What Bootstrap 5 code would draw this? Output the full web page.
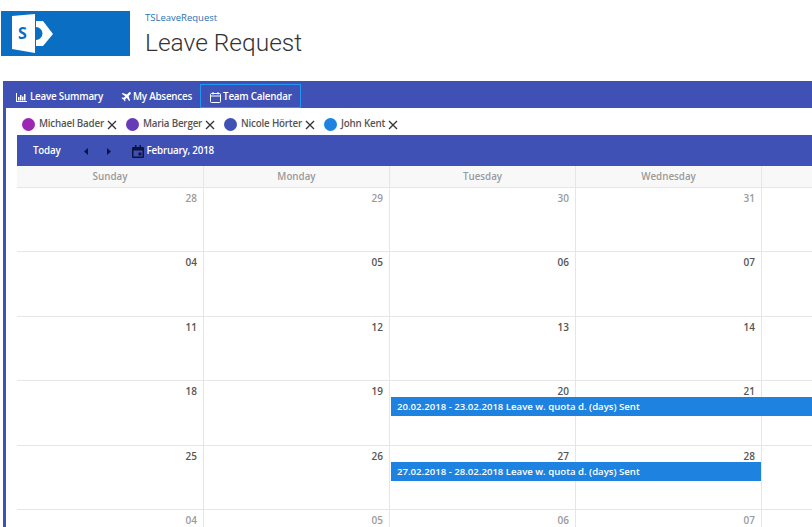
<!DOCTYPE html>
<html lang="en">
<head>
  <meta charset="UTF-8" />
  <meta name="viewport" content="width=device-width, initial-scale=1.0"/>
  <title>Leave Request</title>
  <link href="https://cdn.jsdelivr.net/npm/bootstrap@5.3.3/dist/css/bootstrap.min.css" rel="stylesheet">
  <style>
    html, body { height: 527px; overflow: hidden; }
    body { font-family: "Open Sans", "Noto Sans", sans-serif; background: #fff; color: #444; }
    .site-head { height: 81px; padding: 11px 0 0 1px; }
    .site-logo { width: 129px; height: 45px; background: #0a6fc2; padding: 3px 0 0 11px; }
    .site-titles { margin-left: 15px; }
    .site-crumb { font-size: 9.5px; line-height: 12px; color: #2a72b5; margin-top: 1px; }
    .site-title { font-family: Roboto, sans-serif; font-weight: 300; font-size: 24.5px; line-height: 34px; color: #333; margin: 2px 0 0; }
    .app-frame { margin-left: 3px; border-left: 3px solid #3f51b5; height: 446px; overflow: hidden; }
    .app-tabs { background: #3f51b5; height: 27px; margin-left: -3px; padding-left: 3px; }
    .app-tab { height: 24px; padding: 2px 8px 0 10px; color: #fff; font-size: 9.8px; letter-spacing: -.2px; font-weight: 600; gap: 2px; text-decoration: none; }
    .app-tab.active { border: 1px solid #2196f3; padding: 2px 8px 0 9px; }
    .app-body { padding-left: 11px; }
    .people { height: 27px; padding: 5px 0 0 5px; font-size: 9.8px; letter-spacing: -.2px; font-weight: 600; color: #555; }
    .person-dot { width: 13px; height: 13px; border-radius: 50%; margin-right: 4px; }
    .person-x { margin: 2px 9px 0 3px; }
    .cal-bar { background: #3f51b5; height: 31px; padding: 1px 0 0 16px; color: #fff; font-size: 9.8px; letter-spacing: -.2px; font-weight: 600; }
    .cal-nav { margin-left: 23px; gap: 19px; }
    .cal-month { margin-left: 21px; gap: 3px; }
    .cal-scroll { width: 1303px; }
    .cal-head, .cal-week { display: grid; grid-template-columns: 187px repeat(6, 186px); }
    .cal-head { height: 21.5px; background: #f8f8f8; }
    .cal-head > div { border-right: 1px solid #e6e6e6; border-bottom: 1px solid #e6e6e6; text-align: center; font-size: 9.8px; font-weight: 600; color: #9a9a9a; line-height: 21px; }
    .cal-week { height: 64.5px; }
    .cal-day { grid-row: 1; border-right: 1px solid #e6e6e6; border-bottom: 1px solid #e6e6e6; text-align: right; font-size: 10px; font-weight: 600; color: #555; padding: 4px 6px 0 0; line-height: 13px; }
    .cal-day:nth-child(1) { grid-column: 1; }
    .cal-day:nth-child(2) { grid-column: 2; }
    .cal-day:nth-child(3) { grid-column: 3; }
    .cal-day:nth-child(4) { grid-column: 4; }
    .cal-day:nth-child(5) { grid-column: 5; }
    .cal-day:nth-child(6) { grid-column: 6; }
    .cal-day:nth-child(7) { grid-column: 7; }
    .cal-day.other { color: #9a9a9a; }
    .cal-event { grid-row: 1; align-self: start; margin: 16px 1px 0 1px; height: 19px; line-height: 20px; background: #1e82e0; color: #fff; font-size: 9.6px; font-weight: 600; padding-left: 6px; z-index: 1; }
  </style>
</head>
<body>

  <!-- Site header -->
  <div class="site-head d-flex">
    <div class="site-logo">
      <svg width="42" height="40" viewBox="0 0 42 40">
        <path d="M24 7h7l10 13-10 12h-7v-6a6.500 6.500 0 0 0 0-13z" fill="#fff"/>
        <path d="M0 2 23 0v39L0 35z" fill="#fff"/>
        <text x="6" y="25" font-family="Open Sans, sans-serif" font-size="16" font-weight="700" fill="#0a6fc2">S</text>
      </svg>
    </div>
    <div class="site-titles">
      <div class="site-crumb">TSLeaveRequest</div>
      <h1 class="site-title">Leave Request</h1>
    </div>
  </div>

  <div class="app-frame">
    <!-- Tabs -->
    <div class="app-tabs nav align-items-end">
      <a class="app-tab d-flex align-items-center">
        <svg width="12" height="9" viewBox="0 0 12 9" fill="#fff"><path d="M0 0h1v8h10v1H0z"/><path d="M2 4h1.500v3.500H2zM4 2h1.500v5.500H4zM6 3.500h1.500v4H6zM8 1h1.500v6.500H8z"/></svg>
        Leave Summary
      </a>
      <a class="app-tab d-flex align-items-center">
        <svg width="10" height="10" viewBox="0 0 10 10" fill="#fff"><path d="M9.600.4c-.5-.5-1.300-.3-2 .4L6 2.400 1.500 1 .7 1.800l3.600 2.400L2.700 5.800 1.200 5.500.5 6.200l2 1.300 1.300 2 .7-.7-.3-1.500 1.600-1.600 2.400 3.600.8-.8L7.600 4l1.600-1.600c.7-.7.900-1.500.4-2z"/></svg>
        My Absences
      </a>
      <a class="app-tab active d-flex align-items-center">
        <svg width="11" height="11" viewBox="0 0 11 11" fill="none" stroke="#fff"><rect x=".5" y="1.500" width="10" height="9" rx="1"/><path d="M.5 4h10M3 0v2.500M8 0v2.500"/></svg>
        Team Calendar
      </a>
    </div>

    <div class="app-body">
      <!-- People filter -->
      <div class="people d-flex align-items-center">
        <span class="person-dot" style="background:#9c27b0"></span>Michael Bader
        <svg class="person-x" width="10" height="10" viewBox="0 0 10 10" stroke="#333" stroke-width="1.300"><path d="M1 1l8 8M9 1l-8 8"/></svg>
        <span class="person-dot" style="background:#673ab7"></span>Maria Berger
        <svg class="person-x" width="10" height="10" viewBox="0 0 10 10" stroke="#333" stroke-width="1.300"><path d="M1 1l8 8M9 1l-8 8"/></svg>
        <span class="person-dot" style="background:#3f51b5"></span>Nicole Hörter
        <svg class="person-x" width="10" height="10" viewBox="0 0 10 10" stroke="#333" stroke-width="1.300"><path d="M1 1l8 8M9 1l-8 8"/></svg>
        <span class="person-dot" style="background:#1e82e0"></span>John Kent
        <svg class="person-x" width="10" height="10" viewBox="0 0 10 10" stroke="#333" stroke-width="1.300"><path d="M1 1l8 8M9 1l-8 8"/></svg>
      </div>

      <!-- Calendar toolbar -->
      <div class="cal-bar d-flex align-items-center">
        <span>Today</span>
        <span class="cal-nav d-flex align-items-center">
          <svg width="4" height="7" viewBox="0 0 4 7" fill="#0d1440"><path d="M4 0v7L0 3.500z"/></svg>
          <svg width="4" height="7" viewBox="0 0 4 7" fill="#0d1440"><path d="M0 0v7l4-3.500z"/></svg>
        </span>
        <span class="cal-month d-flex align-items-center">
          <svg width="12" height="13" viewBox="0 0 12 13" fill="#0d1440"><path d="M1 2h2V0h1.500v2h3V0H9v2h2a1 1 0 0 1 1 1v9a1 1 0 0 1-1 1H1a1 1 0 0 1-1-1V3a1 1 0 0 1 1-1zm.5 3.500v6h9v-6z"/><path d="M6.500 7.500h3v3h-3z"/></svg>
          February, 2018
        </span>
      </div>

      <!-- Calendar grid -->
      <div class="cal-scroll">
        <div class="cal-head">
          <div>Sunday</div><div>Monday</div><div>Tuesday</div><div>Wednesday</div><div>Thursday</div><div>Friday</div><div>Saturday</div>
        </div>
        <div class="cal-week">
          <div class="cal-day other">28</div><div class="cal-day other">29</div><div class="cal-day other">30</div><div class="cal-day other">31</div><div class="cal-day">01</div><div class="cal-day">02</div><div class="cal-day">03</div>
        </div>
        <div class="cal-week">
          <div class="cal-day">04</div><div class="cal-day">05</div><div class="cal-day">06</div><div class="cal-day">07</div><div class="cal-day">08</div><div class="cal-day">09</div><div class="cal-day">10</div>
        </div>
        <div class="cal-week">
          <div class="cal-day">11</div><div class="cal-day">12</div><div class="cal-day">13</div><div class="cal-day">14</div><div class="cal-day">15</div><div class="cal-day">16</div><div class="cal-day">17</div>
        </div>
        <div class="cal-week">
          <div class="cal-day">18</div><div class="cal-day">19</div><div class="cal-day">20</div><div class="cal-day">21</div><div class="cal-day">22</div><div class="cal-day">23</div><div class="cal-day">24</div>
          <div class="cal-event" style="grid-column:3 / 7">20.02.2018 - 23.02.2018 Leave w. quota d. (days) Sent</div>
        </div>
        <div class="cal-week">
          <div class="cal-day">25</div><div class="cal-day">26</div><div class="cal-day">27</div><div class="cal-day">28</div><div class="cal-day other">01</div><div class="cal-day other">02</div><div class="cal-day other">03</div>
          <div class="cal-event" style="grid-column:3 / 5">27.02.2018 - 28.02.2018 Leave w. quota d. (days) Sent</div>
        </div>
        <div class="cal-week">
          <div class="cal-day other">04</div><div class="cal-day other">05</div><div class="cal-day other">06</div><div class="cal-day other">07</div><div class="cal-day other">08</div><div class="cal-day other">09</div><div class="cal-day other">10</div>
        </div>
      </div>
    </div>
  </div>

  <script src="https://cdn.jsdelivr.net/npm/bootstrap@5.3.3/dist/js/bootstrap.bundle.min.js"></script>
</body>
</html>
